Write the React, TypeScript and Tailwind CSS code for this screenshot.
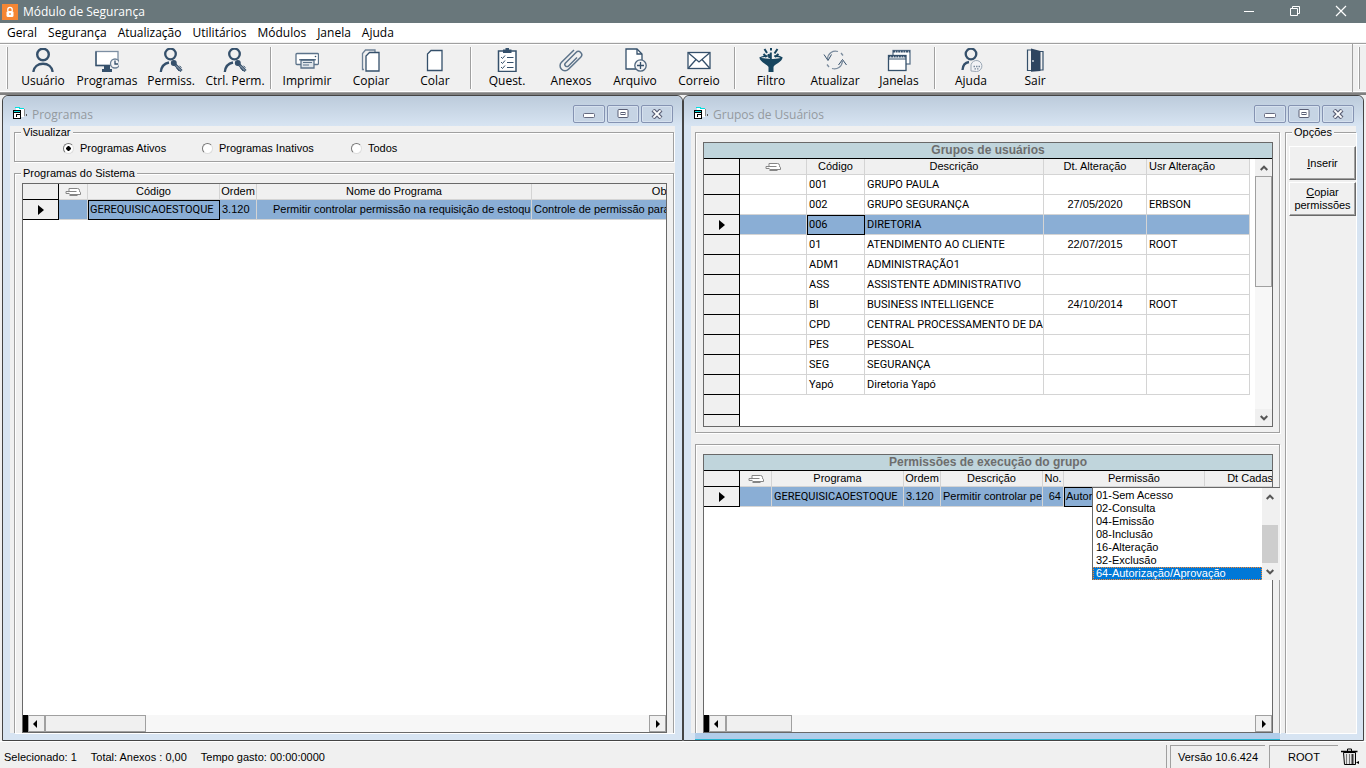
import { useState } from 'react';
import type { ReactNode } from 'react';

const MENUS = ['Geral', 'Segurança', 'Atualização', 'Utilitários', 'Módulos', 'Janela', 'Ajuda'];

const FILTERS = [
  { label: 'Programas Ativos', width: 'w-[139px]' },
  { label: 'Programas Inativos', width: 'w-[149px]' },
  { label: 'Todos', width: 'w-20' },
];

const GROUPS = [
  { code: '001', name: 'GRUPO PAULA', date: '', user: '' },
  { code: '002', name: 'GRUPO SEGURANÇA', date: '27/05/2020', user: 'ERBSON' },
  { code: '006', name: 'DIRETORIA', date: '', user: '' },
  { code: '01', name: 'ATENDIMENTO AO CLIENTE', date: '22/07/2015', user: 'ROOT' },
  { code: 'ADM1', name: 'ADMINISTRAÇÃO1', date: '', user: '' },
  { code: 'ASS', name: 'ASSISTENTE ADMINISTRATIVO', date: '', user: '' },
  { code: 'BI', name: 'BUSINESS INTELLIGENCE', date: '24/10/2014', user: 'ROOT' },
  { code: 'CPD', name: 'CENTRAL PROCESSAMENTO DE DADOS', date: '', user: '' },
  { code: 'PES', name: 'PESSOAL', date: '', user: '' },
  { code: 'SEG', name: 'SEGURANÇA', date: '', user: '' },
  { code: 'Yapó', name: 'Diretoria Yapó', date: '', user: '' },
];

const PERMISSIONS = [
  '01-Sem Acesso',
  '02-Consulta',
  '04-Emissão',
  '08-Inclusão',
  '16-Alteração',
  '32-Exclusão',
  '64-Autorização/Aprovação',
];

const th = 'h-4 border-r border-b border-[#d4d4d4] bg-[#f0f0f0] p-0 font-normal whitespace-nowrap overflow-hidden';
const td = 'h-5 border-r border-b border-[#d4d4d4] px-0.5 py-0 whitespace-nowrap overflow-hidden';
const selector = 'border-r border-b border-black bg-[#f0f0f0] p-0';
const segoe = 'font-["Open_Sans","Noto_Sans",sans-serif]';

/* ---------- toolbar icons ---------- */

function Icon({ children }: { children: ReactNode }) {
  return (
    <svg viewBox="0 0 24 24" className="h-6 w-6" fill="none" stroke="#35506b" strokeWidth="1.3">
      {children}
    </svg>
  );
}

const ICONS: Record<string, ReactNode> = {
  user: (
    <>
      <circle cx="12" cy="6.5" r="5.8" strokeWidth="2.4" />
      <path d="M2.300 24c.6-5.200 4.700-8.300 9.700-8.300s9.100 3.100 9.700 8.300" strokeWidth="2.4" />
    </>
  ),
  programs: (
    <>
      <rect x="1" y="3.500" width="22" height="14" fill="#fff" stroke="#7d8fa3" />
      <path d="M1 3.500v14h14" />
      <path d="M9 18h6v3h2v3H7v-3h2z" fill="#35506b" stroke="none" />
      <circle cx="20" cy="15.500" r="4.500" fill="#f4f4f6" stroke="#6d8196" />
      <path d="M20 12.500v3.500h3" />
    </>
  ),
  userKey: (
    <>
      <circle cx="11.500" cy="6" r="5.300" strokeWidth="2.300" />
      <path d="M1.800 24c.5-5.500 3.200-8.500 8.200-9.500" strokeWidth="2.300" />
      <circle cx="14.800" cy="15" r="2.300" fill="#35506b" />
      <path d="M16 16.500l6.500 6.500" strokeWidth="3" />
      <path d="M17 17.500l5 5" stroke="#c9d1d9" strokeWidth=".8" />
      <path d="M17.500 20l2.500 3M20.500 18l2 1.500" strokeWidth="1" />
    </>
  ),
  print: (
    <>
      <rect x="1" y="5.500" width="22.500" height="11" rx="1" fill="#fff" stroke="#5c738a" />
      <circle cx="20.500" cy="8.500" r=".8" fill="#35506b" stroke="none" />
      <path d="M6 12h13v8H6z" fill="#dfe5ea" stroke="#5c738a" />
      <path d="M8 14.500h9M8 17h6" stroke="#5c738a" strokeWidth="1" />
      <path d="M4 11.800h17" strokeWidth="1" />
    </>
  ),
  copy: (
    <>
      <path d="M5 21.500H3.500V5.500l3-3.500H16v2" stroke="#6d8196" />
      <path d="M10.500 4.500H20V23H7V8z" fill="#fff" />
    </>
  ),
  paste: <path d="M8 2.500h11v20H4.500V6z" fill="#fff" />,
  quest: (
    <>
      <rect x="3.500" y="3" width="17.500" height="20.500" fill="#fff" strokeWidth="1.500" />
      <path d="M8 1.500h2.500V0h3.500v1.500h2.500V5H8z" fill="#35506b" stroke="none" />
      <path d="M6 9l1.500 1.500L10 7.500M6 14l1.500 1.500L10 12.500M6 19l1.500 1.500L10 17.500" strokeWidth="1" />
      <path d="M12 9.500h6.500M12 14.500h6.500M12 19.500h6.500" strokeWidth="1" />
    </>
  ),
  clip: (
    <path
      d="M18 9.500L9.500 18a2 2 0 0 1-3-3L17 4.500a3.300 3.300 0 0 1 4.700 4.700L9.500 21.300a4.900 4.900 0 0 1-7-7L15 2"
      stroke="#5c738a"
      strokeWidth="1.500"
    />
  ),
  archive: (
    <>
      <path d="M3 1h11l5 5v15H3z" fill="#fff" />
      <path d="M14 1v5h5" />
      <circle cx="17.500" cy="17.500" r="5.700" fill="#f3f3f5" stroke="#4f677f" />
      <path d="M17.500 14v7M14 17.500h7" />
    </>
  ),
  mail: (
    <>
      <rect x="1" y="4.500" width="22" height="16" fill="#fff" />
      <path d="M1.500 5L12 14 22.500 5M1.500 20l7.500-8.500M22.500 20L15 11.500" />
    </>
  ),
  filter: (
    <>
      <path d="M.5 9.500C.5 14 9 16.500 9.500 19v5h5v-5c.5-2.500 9-5 9-9.500 0 0-5 1.500-11.500 1.500S.5 9.500.5 9.500z" fill="#17455f" stroke="none" />
      <path d="M.8 10c2-1.500 5-2 8-2M23.200 10c-2-1.500-5-2-8-2" stroke="#17455f" />
      <path d="M5.500 1l2.500 4M4.500 6l3 3M11.800 4.500V11M12 0v2.500M18.500 1L15.500 5.500M19.500 6l-3.500 3M9.500 6l1 4" stroke="#17455f" strokeWidth="2" />
    </>
  ),
  refresh: (
    <>
      <path d="M4.500 11C5 5 10 2 15 3.500M18 5l2 2.500M19.500 13c-.5 6-5.500 9-10.500 7.500M6 19l-2-2.500" stroke="#7b8c9e" />
      <path d="M1 6.500l4 6 3.500-6M15.500 17l4-5.500 4 5.500" stroke="#35506b" strokeWidth="1" />
    </>
  ),
  windows: (
    <>
      <rect x="6" y="2.500" width="17" height="13.500" fill="#fff" stroke="#5c738a" />
      <path d="M6 3.500h17" strokeWidth="2" strokeDasharray="2 .6" />
      <rect x="1.500" y="7.500" width="17.500" height="15" fill="#fff" />
      <path d="M1.500 8.500h17.500" strokeWidth="2" strokeDasharray="2 .6" />
      <path d="M1.500 11h17.500" strokeWidth="1" />
    </>
  ),
  help: (
    <>
      <circle cx="12" cy="6" r="5.300" strokeWidth="2.300" />
      <path d="M3.500 22c.3-4.500 2.500-7.500 6.500-8" strokeWidth="2.300" />
      <path d="M12 23v-4a5.500 5.500 0 1 1 5.500 4.500z" fill="#f2f3f6" stroke="#9aa7b4" strokeWidth="1" />
      <path d="M14.500 18.500h7M15.500 20.800h5" stroke="#7b8c9e" strokeDasharray="1.500 1" />
    </>
  ),
  exit: (
    <>
      <path d="M8 2H4.500v20.500H8M16 3.500h4V22h-4" strokeWidth="1.200" />
      <path d="M8 .5l9.500 2.500v20L8 23.800z" fill="#2e4560" stroke="none" />
      <path d="M10 12v2" stroke="#dfe5ea" />
    </>
  ),
};

const TOOLS = [
  [
    ['user', 'Usuário'],
    ['programs', 'Programas'],
    ['userKey', 'Permiss.'],
    ['userKey', 'Ctrl. Perm.'],
  ],
  [
    ['print', 'Imprimir'],
    ['copy', 'Copiar'],
    ['paste', 'Colar'],
  ],
  [
    ['quest', 'Quest.'],
    ['clip', 'Anexos'],
    ['archive', 'Arquivo'],
    ['mail', 'Correio'],
  ],
  [
    ['filter', 'Filtro'],
    ['refresh', 'Atualizar'],
    ['windows', 'Janelas'],
  ],
  [
    ['help', 'Ajuda'],
    ['exit', 'Sair'],
  ],
];

/* ---------- small pieces ---------- */

function FormIcon() {
  return (
    <svg viewBox="0 0 16 16" className="h-4 w-4" shapeRendering="crispEdges">
      <rect x="4" y="3" width="8" height="9" fill="#fff" />
      <rect x="3" y="2" width="5" height="1" fill="#00e0e0" />
      <rect x="7" y="3" width="5" height="1" fill="#00e0e0" />
      <rect x="12" y="4" width="1" height="7" fill="#8a8a8a" />
      <rect x="14" y="9" width="1" height="2" fill="#555" />
      <rect x="1" y="5" width="8" height="9" fill="#000" />
      <rect x="2" y="6" width="6" height="1" fill="#00e0e0" />
      <rect x="2" y="8" width="6" height="5" fill="#fff" />
      <rect x="4" y="9" width="4" height="1" fill="#000" />
      <rect x="4" y="9" width="1" height="3" fill="#000" />
    </svg>
  );
}

function ClipHeader() {
  return (
    <svg viewBox="0 0 16 10" className="mx-auto h-2.5 w-4" fill="none" stroke="#858585">
      <path d="M4 4.500V1.500h8.500q2 0 2 2t1 2v2H4.500M1 4.500h10.500M1 4.500v2h3.500M4.500 8.500h8" fill="#fff" />
    </svg>
  );
}

function Pointer() {
  return (
    <svg viewBox="0 0 6 10" className="mx-auto h-2.5 w-1.5">
      <path d="M0 0l6 5-6 5z" />
    </svg>
  );
}

function HScroll({ thumb }: { thumb: string }) {
  return (
    <div className="flex h-[17px] shrink-0 bg-[#f7f7f7]">
      <div className="w-[5px] bg-black" />
      <button aria-label="Rolar para a esquerda" className="flex w-[17px] items-center justify-center border border-[#a0a0a0] bg-[#f0f0f0] pr-1">
        <svg viewBox="0 0 4 8" className="h-2 w-1"><path d="M4 0v8L0 4z" /></svg>
      </button>
      <div className={`border border-[#a0a0a0] bg-[#f0f0f0] ${thumb}`} />
      <button aria-label="Rolar para a direita" className="ml-auto flex w-[17px] items-center justify-center border border-[#a0a0a0] bg-[#f0f0f0]">
        <svg viewBox="0 0 4 8" className="h-2 w-1"><path d="M0 0v8l4-4z" /></svg>
      </button>
    </div>
  );
}

function Chevron({ up }: { up?: boolean }) {
  return (
    <svg viewBox="0 0 8 6" className="h-1.5 w-2" fill="none" stroke="#555" strokeWidth="2">
      <path d={up ? 'M.7 5L4 1.700 7.300 5' : 'M.7 1L4 4.300 7.300 1'} />
    </svg>
  );
}

function GridTitle({ children }: { children: ReactNode }) {
  return (
    <div className="h-4 shrink-0 border-b border-black bg-[#c0d5dc] text-center text-xs leading-[15px] font-bold text-[#6d6d6d]">
      {children}
    </div>
  );
}

const WINDOW_BUTTON =
  'flex h-[18px] w-8 items-center justify-center rounded-xs border border-[#8593b2] bg-[#c6d4e4] shadow-[inset_0_0_0_1px_#d6e1ee]';

function ChildWindow({ title, active, children }: { title: string; active?: boolean; children: ReactNode }) {
  return (
    <section className="flex min-w-0 flex-1 flex-col rounded-t-md border border-[#444] bg-[#d7e4f2]">
      <header className="flex h-[30px] shrink-0 items-start rounded-t-md bg-linear-to-b from-[#bccbdb] to-[#d7e4f2] pt-[9px] pr-[9px] pl-[9px]">
        <FormIcon />
        <h2 className={`ml-1 text-xs leading-5 text-[#949a9f] ${segoe}`}>{title}</h2>
        <div className="ml-auto flex gap-0.5">
          <button aria-label="Minimizar" className={WINDOW_BUTTON}>
            <svg viewBox="0 0 12 10" className="h-2.5 w-3"><rect x=".5" y="4.500" width="11" height="4" rx="1" fill="#fff" stroke="#666b80" /></svg>
          </button>
          <button aria-label="Maximizar" className={WINDOW_BUTTON}>
            <svg viewBox="0 0 12 10" className="h-2.5 w-3" fill="#fff" stroke="#5a5f75"><rect x="1" y=".5" width="10" height="8" rx="1" /><rect x="4" y="3.500" width="4" height="2" /></svg>
          </button>
          <button aria-label="Fechar" className={WINDOW_BUTTON}>
            <svg viewBox="0 0 12 10" className="h-2.5 w-3" fill="none"><path d="M2 1l8 8M10 1L2 9" stroke="#5a5f75" strokeWidth="4.200" /><path d="M2.400 1.400l7.200 7.200M9.600 1.400L2.400 8.600" stroke="#fff" strokeWidth="2" /></svg>
          </button>
        </div>
      </header>
      <div className="mx-[7px] flex min-h-0 flex-1 bg-[#f0f0f0] pl-1">{children}</div>
      <div className="flex h-[7px] shrink-0 pr-[83px] pl-[11px]">
        {active && <div className="flex-1 border-b border-[#29b6d3] bg-[#b1cdea]" />}
      </div>
    </section>
  );
}

const ETCHED = 'border border-[#a0a0a0] shadow-[inset_1px_1px_0_#fff,1px_1px_0_#fff]';
const LEGEND = 'ml-1.5 bg-[#f0f0f0] px-0.5 leading-3';

/* ---------- windows ---------- */

function ProgramsWindow() {
  const [filter, setFilter] = useState('Programas Ativos');

  return (
    <ChildWindow title="Programas">
      <div className="mr-px flex min-w-0 flex-1 flex-col gap-[5px]">
        <fieldset className={`min-w-0 ${ETCHED}`}>
          <legend className={LEGEND}>Visualizar</legend>
          <div className="flex h-[23px] items-center pb-0.5 pl-12">
            {FILTERS.map(({ label, width }) => (
              <label key={label} className={`flex items-center gap-1.5 ${width}`}>
                <input
                  type="radio"
                  name="filter"
                  checked={filter === label}
                  onChange={() => setFilter(label)}
                  className="h-[11px] w-[11px] appearance-none rounded-full border border-t-[#777] border-r-[#ddd] border-b-[#ddd] border-l-[#777] bg-white checked:bg-[radial-gradient(circle,#000_2px,#fff_2.5px)]"
                />
                {label}
              </label>
            ))}
          </div>
        </fieldset>

        <fieldset className={`min-h-0 min-w-0 flex-1 border-b-0 ${ETCHED}`}>
          <legend className={LEGEND}>Programas do Sistema</legend>
          <div className="flex h-full pt-1 pr-1.5 pl-[7px]">
            <div className="flex min-w-0 flex-1 flex-col border border-[#696969] bg-white">
              <div className="min-h-0 flex-1 overflow-hidden">
                <table className="w-px table-fixed border-separate border-spacing-0 leading-[15px]">
                  <colgroup>
                    <col className="w-9" />
                    <col className="w-[29px]" />
                    <col className="w-[132px]" />
                    <col className="w-[37px]" />
                    <col className="w-[275px]" />
                    <col className="w-[300px]" />
                  </colgroup>
                  <thead>
                    <tr>
                      <th className={selector} />
                      <th className={th}><ClipHeader /></th>
                      <th className={th}>Código</th>
                      <th className={th}>Ordem</th>
                      <th className={th}>Nome do Programa</th>
                      <th className={th}>Observação</th>
                    </tr>
                  </thead>
                  <tbody>
                    <tr className="bg-[#8aaed5]">
                      <td className={selector}><Pointer /></td>
                      <td className={td} />
                      <td className={`${td} font-[Roboto] outline outline-offset-[-1px] outline-black`}>GEREQUISICAOESTOQUE</td>
                      <td className={td}>3.120</td>
                      <td className={`${td} pl-4`}>Permitir controlar permissão na requisição de estoque</td>
                      <td className={td}>Controle de permissão para requisição de estoque</td>
                    </tr>
                  </tbody>
                </table>
              </div>
              <HScroll thumb="w-[101px]" />
            </div>
          </div>
        </fieldset>
      </div>
    </ChildWindow>
  );
}

function GroupsGrid() {
  const [selected, setSelected] = useState('006');

  return (
    <div className="flex flex-col border border-[#696969] bg-white">
      <GridTitle>Grupos de usuários</GridTitle>
      <div className="flex h-[267px]">
        <div className="min-w-0 flex-1 overflow-hidden">
          <table className="w-px table-fixed border-separate border-spacing-0 leading-[15px]">
            <colgroup>
              <col className="w-9" />
              <col className="w-[67px]" />
              <col className="w-[58px]" />
              <col className="w-[179px]" />
              <col className="w-[103px]" />
              <col className="w-[103px]" />
            </colgroup>
            <thead>
              <tr>
                <th className={selector} />
                <th className={th}><ClipHeader /></th>
                <th className={th}>Código</th>
                <th className={th}>Descrição</th>
                <th className={th}>Dt. Alteração</th>
                <th className={`${th} px-0.5 text-left`}>Usr Alteração</th>
              </tr>
            </thead>
            <tbody>
              {GROUPS.map((g) => {
                const on = g.code === selected;
                return (
                  <tr key={g.code} className={on ? 'bg-[#8aaed5]' : ''} onClick={() => setSelected(g.code)}>
                    <td className={selector}>{on && <Pointer />}</td>
                    <td className={td} />
                    <td className={`${td} font-[Roboto] ${on ? 'outline outline-offset-[-1px] outline-black' : ''}`}>{g.code}</td>
                    <td className={`${td} font-[Roboto]`}>{g.name}</td>
                    <td className={`${td} text-center`}>{g.date}</td>
                    <td className={`${td} font-[Roboto]`}>{g.user}</td>
                  </tr>
                );
              })}
              <tr><td className={`${selector} h-5`} /></tr>
              <tr><td className={`${selector} h-5`} /></tr>
            </tbody>
          </table>
        </div>
        <div className="flex w-[17px] flex-col bg-[#f7f7f7]">
          <button aria-label="Rolar para cima" className="flex h-[17px] items-center justify-center bg-[#f0f0f0]"><Chevron up /></button>
          <div className="h-[111px] border border-[#a0a0a0] bg-[#f0f0f0]" />
          <button aria-label="Rolar para baixo" className="mt-auto flex h-[17px] items-center justify-center bg-[#f0f0f0]"><Chevron /></button>
        </div>
      </div>
    </div>
  );
}

function PermissionsGrid() {
  const [permission, setPermission] = useState(PERMISSIONS[6]);

  return (
    <div className="relative flex min-h-0 flex-1 flex-col border border-[#696969] bg-white">
      <GridTitle>Permissões de execução do grupo</GridTitle>
      <div className="min-h-0 flex-1 overflow-hidden">
        <table className="w-px table-fixed border-separate border-spacing-0 leading-[15px]">
          <colgroup>
            <col className="w-9" />
            <col className="w-8" />
            <col className="w-[132px]" />
            <col className="w-[37px]" />
            <col className="w-[102px]" />
            <col className="w-[21px]" />
            <col className="w-[141px]" />
            <col className="w-[104px]" />
          </colgroup>
          <thead>
            <tr>
              <th className={selector} />
              <th className={th}><ClipHeader /></th>
              <th className={th}>Programa</th>
              <th className={th}>Ordem</th>
              <th className={th}>Descrição</th>
              <th className={th}>No.</th>
              <th className={th}>Permissão</th>
              <th className={th}>Dt Cadastro</th>
            </tr>
          </thead>
          <tbody>
            <tr className="bg-[#8aaed5]">
              <td className={selector}><Pointer /></td>
              <td className={td} />
              <td className={`${td} font-[Roboto]`}>GEREQUISICAOESTOQUE</td>
              <td className={td}>3.120</td>
              <td className={td}>Permitir controlar permissão</td>
              <td className={`${td} text-right`}>64</td>
              <td className={`${td} outline outline-offset-[-1px] outline-black`}>Autorização/Aprovação</td>
              <td className={td} />
            </tr>
          </tbody>
        </table>
      </div>
      <HScroll thumb="w-[66px]" />

      {/* open list of the Permissão cell */}
      <div className="absolute top-8 left-[388px] flex h-[93px] w-[188px] border-t border-l border-[#696969] bg-white">
        <select
          aria-label="Permissão"
          size={7}
          value={permission}
          onChange={(e) => setPermission(e.target.value)}
          className="h-[92px] flex-1 appearance-none overflow-hidden border-0 bg-white pt-px text-[11px] leading-[13px] outline-none"
        >
          {PERMISSIONS.map((p) => (
            <option
              key={p}
              className="h-[13px] min-h-0 p-0 pl-[3px] leading-[13px] checked:bg-[linear-gradient(#0078d7,#0078d7)] checked:outline-1 checked:outline-offset-[-1px] checked:outline-dotted checked:outline-[#ff8728] checked:[-webkit-text-fill-color:#fff]"
            >
              {p}
            </option>
          ))}
        </select>
        <div className="flex w-[18px] flex-col items-center bg-[#f0f0f0] pr-0.5">
          <div className="flex h-[17px] items-center"><Chevron up /></div>
          <div className="mt-auto h-[38px] w-4 bg-[#cdcdcd]" />
          <div className="flex h-[17px] items-center"><Chevron /></div>
        </div>
      </div>
    </div>
  );
}

function GroupsWindow() {
  const button =
    'h-[34px] w-full border border-t-white border-r-[#696969] border-b-[#696969] border-l-white bg-[#f0f0f0] leading-[13px] shadow-[inset_-1px_-1px_0_#a0a0a0]';

  return (
    <ChildWindow title="Grupos de Usuários" active>
      <div className="mr-px flex min-w-0 flex-1 flex-col pt-1.5">
        <div className={`pt-[9px] pr-1.5 pb-[5px] pl-[7px] ${ETCHED}`}>
          <GroupsGrid />
        </div>
        <div className={`mt-[11px] flex min-h-0 flex-1 flex-col border-b-0 pt-[9px] pr-1.5 pl-[7px] ${ETCHED}`}>
          <PermissionsGrid />
        </div>
      </div>
      <fieldset className={`ml-1 w-[71px] shrink-0 border-r-0 border-b-0 ${ETCHED}`}>
        <legend className={LEGEND}>Opções</legend>
        <div className="flex flex-col gap-0.5 pt-2 pl-[3px]">
          <button className={button}><u>I</u>nserir</button>
          <button className={button}><u>C</u>opiar<br />permissões</button>
        </div>
      </fieldset>
    </ChildWindow>
  );
}

/* ---------- shell ---------- */

function TitleBar() {
  return (
    <header className={`flex h-[23px] shrink-0 items-center bg-[#69777b] pr-0.5 pl-0.5 text-xs text-white ${segoe}`}>
      <svg viewBox="0 0 16 16" className="h-4 w-4">
        <path d="M0 0h16v16H0z" fill="#f58634" />
        <rect x="4.500" y="7" width="7" height="6" rx="1.500" fill="#fff" />
        <path d="M5.800 7V5.500a2.200 2.200 0 0 1 4.400 0V7" fill="none" stroke="#fff" strokeWidth="1.300" />
        <path d="M8 9v2" stroke="#f58634" strokeWidth="1.200" />
      </svg>
      <h1 className="ml-[5px]">Módulo de Segurança</h1>
      <div className="ml-auto flex pb-0.5">
        <button aria-label="Minimizar" className="flex h-5 w-[46px] items-center justify-center">
          <svg viewBox="0 0 12 12" className="h-3 w-3" stroke="#fff"><path d="M1 6.500h10" /></svg>
        </button>
        <button aria-label="Restaurar" className="flex h-5 w-[46px] items-center justify-center">
          <svg viewBox="0 0 12 12" className="h-3 w-3" fill="none" stroke="#fff"><path d="M1.500 3.500h7v7h-7zM3.500 3.500v-2h7v7h-2" /></svg>
        </button>
        <button aria-label="Fechar" className="flex h-5 w-[46px] items-center justify-center">
          <svg viewBox="0 0 12 12" className="h-3 w-3" stroke="#fff" strokeWidth="1.200"><path d="M1 1l10 10M11 1L1 11" /></svg>
        </button>
      </div>
    </header>
  );
}

function Toolbar() {
  return (
    <div className="flex h-[50px] shrink-0 border-t border-b border-[#a0a0a0] pr-0.5 pl-1.5 shadow-[inset_0_1px_0_#fff,inset_0_-1px_0_#fff]">
      <div className="my-[3px] mr-[3px] w-0.5 border-r border-[#a0a0a0] bg-white" />
      {TOOLS.map((group, i) => (
        <div key={i} className="flex">
          {i > 0 && <div className="mx-[3px] my-[3px] w-0.5 border-l border-[#a0a0a0] bg-white" />}
          {group.map(([icon, label]) => (
            <button key={label} className={`flex w-16 flex-col items-center pt-1 text-xs leading-[17px] whitespace-nowrap ${segoe}`}>
              <Icon>{ICONS[icon]}</Icon>
              {label}
            </button>
          ))}
        </div>
      ))}
      <div className="ml-auto flex w-3 justify-center border-l border-[#a0a0a0] py-[3px]">
        <div className="w-0.5 border-r border-[#a0a0a0] bg-white" />
      </div>
    </div>
  );
}

function StatusBar() {
  return (
    <footer className="flex h-[27px] shrink-0 border-t border-white pl-1">
      <div className="flex flex-1 items-center gap-3.5 pt-1">
        <span>Selecionado: 1</span>
        <span>Total: Anexos : 0,00</span>
        <span>Tempo gasto: 00:00:0000</span>
      </div>
      <div className="mt-[3px] mr-[3px] border-l border-[#a0a0a0]" />
      <div className="mt-[3px] mr-1 flex w-[95px] items-center justify-center border-t border-l border-[#a0a0a0]">Versão 10.6.424</div>
      <div className="mt-[3px] flex w-[69px] items-center justify-center border-t border-l border-[#a0a0a0]">ROOT</div>
      <button aria-label="Lixeira" className="mr-1.5 ml-0.5 pt-1">
        <svg viewBox="0 0 20 18" className="h-[18px] w-5" fill="none" stroke="#000">
          <path d="M3.500 4.500h12v12h-11z" fill="#e4e4e4" />
          <path d="M6.500 6v10M9.500 6v10" stroke="#777" />
          <path d="M12.500 6v10" stroke="#333" strokeWidth="2" />
          <path d="M1 3.500h16.500" strokeWidth="1.500" />
          <path d="M7.500 3V1h4v2" />
          <path d="M16 14.500l3-1.500v3z" fill="#000" stroke="none" />
        </svg>
      </button>
    </footer>
  );
}

export default function App() {
  return (
    <div className='flex h-screen flex-col overflow-hidden bg-[#f0f0f0] font-["Liberation_Sans",Arial,sans-serif] text-[11px] text-black'>
      <TitleBar />
      <nav className={`flex h-5 shrink-0 items-start gap-[11px] border-b border-[#f0f0f0] bg-white pl-[7px] text-xs leading-5 ${segoe}`}>
        {MENUS.map((m) => (
          <button key={m}>{m}</button>
        ))}
      </nav>
      <Toolbar />
      <main className="flex min-h-0 flex-1 border-t-2 border-[#808080] px-0.5">
        <ProgramsWindow />
        <GroupsWindow />
      </main>
      <StatusBar />
    </div>
  );
}
